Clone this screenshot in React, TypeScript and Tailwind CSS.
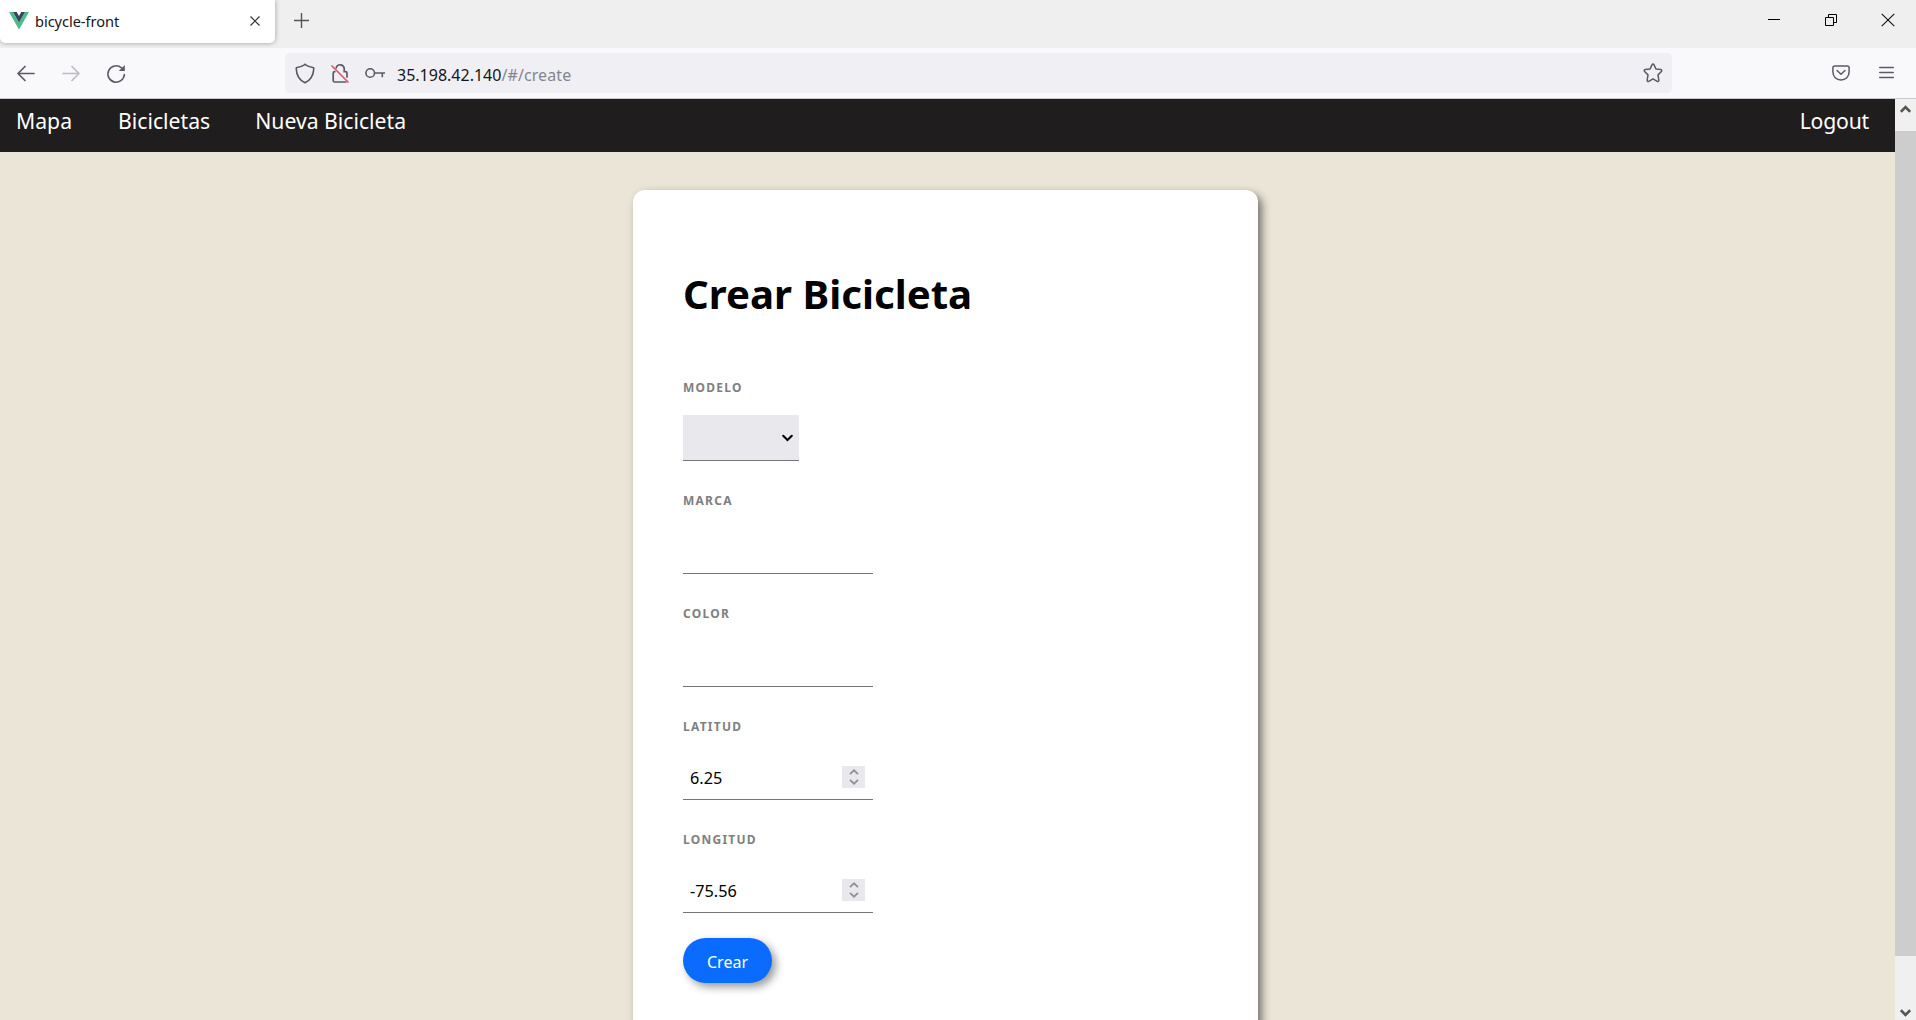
import React from "react";

const navLink = "leading-[30px] text-[21.2px] text-white whitespace-nowrap";

function VueLogo() {
  return (
    <svg className="w-5 h-[18px]" viewBox="0 0 20 18">
      <path d="M0 0h4l6 10.4L16 0h4L10 17.4z" fill="#4dba87" />
      <path d="M4 0h3.7L10 4l2.3-4H16L10 10.4z" fill="#33475b" />
    </svg>
  );
}

function TabStrip() {
  return (
    <div className="flex h-12 bg-[#efefef]">
      <div className="flex h-[43px] w-[275px] items-center rounded-b-[5px] bg-white pl-[9px] shadow-[0_0_5px_rgba(0,0,0,0.35)]">
        <div className="-mt-[2px]"><VueLogo /></div>
        <span className="ml-[6px] mt-px w-[210px] text-[14.6px] tracking-[-0.05px] text-[#15141a]">bicycle-front</span>
        <svg className="-mt-[2px] ml-[5px] h-[10px] w-[10px]" viewBox="0 0 10 10" stroke="#333" strokeWidth="1.2">
          <path d="M.5.5l9 9M9.5.5l-9 9" />
        </svg>
      </div>
      <svg className="ml-[19px] mt-[13px] h-[15px] w-[15px]" viewBox="0 0 15 15" stroke="#555" strokeWidth="1.4">
        <path d="M7.5 0v15M0 7.5h15" />
      </svg>
      <div className="ml-auto flex pr-[21px] pt-[13px]">
        <svg className="mr-[45px] h-[14px] w-3" viewBox="0 0 12 14" stroke="#000">
          <path d="M0 6.5h12" />
        </svg>
        <svg className="mr-[43px] h-[14px] w-[13px]" viewBox="0 0 13 14" fill="none" stroke="#000">
          <path d="M.5 4.5h8v8h-8zM3.500 4.500v-3h8v8h-3" />
        </svg>
        <svg className="h-[14px] w-[14px]" viewBox="0 0 14 14" stroke="#111" strokeWidth="1.1">
          <path d="M.7.9l12.600 12.200M13.300.9L.7 13.100" />
        </svg>
      </div>
    </div>
  );
}

function Toolbar() {
  return (
    <div className="flex h-[51px] items-start border-b border-[#c9c9cc] bg-[#f9f9fb]">
      <div className="flex w-[285px] pl-[17px] pt-[16px]">
        <svg className="h-[19px] w-[18px]" viewBox="0 0 18 19" fill="none" stroke="#5b5b66" strokeWidth="1.7" strokeLinecap="round" strokeLinejoin="round">
          <path d="M17 9.500H1.200M8 2.500L1 9.500l7 7" />
        </svg>
        <svg className="ml-[27px] h-[19px] w-[18px]" viewBox="0 0 18 19" fill="none" stroke="#bdbdc3" strokeWidth="1.7" strokeLinecap="round" strokeLinejoin="round">
          <path d="M1 9.500h15.800M10 2.500l7 7-7 7" />
        </svg>
        <svg className="ml-[26px] h-5 w-5" viewBox="0 0 20 20" fill="none" stroke="#5b5b66" strokeWidth="1.6" strokeLinecap="round">
          <path d="M18.300 10.500a8.200 8.200 0 1 1-2.800-6.700" />
          <path d="M18.800 1v6h-6z" fill="#5b5b66" stroke="none" />
        </svg>
      </div>
      <div className="mt-[5px] flex h-10 w-[1387px] items-center rounded-[5px] bg-[#f0f0f4] pl-[10px] pr-[9px]">
        <svg className="h-[21px] w-5" viewBox="0 0 20 21" fill="none" stroke="#55555f" strokeWidth="1.6" strokeLinejoin="round">
          <path d="M10 1.200C8.400 2.800 4.600 4 2 4.500c-.6.100-.8.500-.8 1C1.500 12 4 17 10 19.800 16 17 18.500 12 18.800 5.500c0-.5-.2-.9-.8-1C15.400 4 11.600 2.800 10 1.200z" />
        </svg>
        <svg className="ml-[16px] h-[22px] w-[18px]" viewBox="0 0 18 22" fill="none" strokeLinecap="round">
          <path d="M5.200 5.800a4.100 4.100 0 0 1 8 .4v3.500h1.300c1 0 1.500.5 1.500 1.500V15M3.800 9.700c-1 0-1.600.5-1.600 1.500v7.200c0 1 .6 1.600 1.600 1.600h11" stroke="#5b5b66" strokeWidth="1.700" />
          <path d="M1 4l16 16" stroke="#e55373" strokeWidth="1.700" />
        </svg>
        <svg className="-mt-[1px] ml-[16px] h-3 w-5" viewBox="0 0 20 12" fill="none" stroke="#5b5b66" strokeWidth="1.600">
          <circle cx="5.200" cy="6" r="4.300" />
          <path d="M9.500 6H20M17.300 6v4.200" />
        </svg>
        <span className="ml-[12px] mt-[3px] text-[16px] text-[#15141a]">
          35.198.42.140<span className="tracking-[0.1px] text-[#85858d]">/#/create</span>
        </span>
        <svg className="ml-auto h-5 w-5" viewBox="0 0 20 20" fill="none" stroke="#5b5b66" strokeWidth="1.500" strokeLinejoin="round">
          <path d="M9.100 1.600c.4-.8 1.400-.8 1.800 0l2 4.300 4.900.7c1 .2 1.300 1.200.6 1.900l-3.400 3.400.8 5.300c.1 1-.8 1.600-1.600 1.100L10 15.800l-4.200 2.500c-.8.500-1.700-.1-1.600-1.100l.8-5.300-3.400-3.400c-.7-.7-.4-1.700.6-1.900l4.900-.7z" />
        </svg>
      </div>
      <div className="ml-auto flex items-start pr-[22px] pt-[17px]">
        <svg className="h-[16px] w-[18px]" viewBox="0 0 19 17" fill="none" stroke="#5b5b66" strokeWidth="1.600" strokeLinecap="round" strokeLinejoin="round">
          <path d="M2.800 1h13.400c1.200 0 1.900.7 1.900 1.900v4.300C18.100 12.500 14.500 16 9.500 16S.9 12.500.9 7.200V2.900C.9 1.700 1.600 1 2.800 1z" />
          <path d="M5.300 5.800l4.200 4 4.200-4" />
        </svg>
        <svg className="ml-[29px] mt-[1px] h-[13px] w-[15px]" viewBox="0 0 15 13" stroke="#5b5b66" strokeWidth="1.500" strokeLinecap="round">
          <path d="M.7 1.500h13.600M.7 6.500h13.600M.7 11.500h13.600" />
        </svg>
      </div>
    </div>
  );
}

function Spinner() {
  return (
    <span className="flex h-[22px] w-[23px] items-center justify-center bg-[#e9e9ed]">
      <svg className="h-[16px] w-[10px]" viewBox="0 0 10 16" fill="none" stroke="#8f8f94" strokeWidth="1.700">
        <path d="M1 5.200l4-3.900 4 3.900M1 10.800l4 3.900 4-3.900" />
      </svg>
    </span>
  );
}

function Field({ label, children }: { label: string; children: React.ReactNode }) {
  return (
    <div className="h-[113px]">
      <div className="mb-[20px] h-[15px] text-[12px] font-bold leading-[15px] tracking-[1.25px] text-[#808080]">{label}</div>
      {children}
    </div>
  );
}

function TextBox({ value, numeric }: { value?: string; numeric?: boolean }) {
  return (
    <div className="flex h-[46px] w-[190px] items-center justify-between border-b border-[#757575] pl-[7px] pr-[8px]">
      <span className="mt-[3px] text-[16.3px] text-black">{value}</span>
      {numeric && <Spinner />}
    </div>
  );
}

function ScrollBar() {
  return (
    <div className="flex w-[21px] flex-col bg-[#f0f0f0]">
      <svg className="ml-[5px] mt-[6px] h-2 w-[11px] shrink-0" viewBox="0 0 11 8" fill="none" stroke="#555" strokeWidth="2.600">
        <path d="M.9 6.800l4.600-4.600 4.600 4.600" />
      </svg>
      <div className="mt-[18px] h-[825px] shrink-0 bg-[#cdcdcd]" />
      <svg className="ml-[5px] mt-[53px] h-2 w-[11px] shrink-0" viewBox="0 0 11 8" fill="none" stroke="#555" strokeWidth="2.600">
        <path d="M.9 1.200l4.600 4.600 4.600-4.600" />
      </svg>
    </div>
  );
}

export default function App() {
  return (
    <div className="flex h-[1020px] w-[1916px] flex-col overflow-hidden font-['Noto_Sans','Open_Sans',sans-serif]">
      <TabStrip />
      <Toolbar />
      <div className="flex h-[921px]">
        <main className="flex w-[1895px] flex-col overflow-hidden bg-[#ebe5d8]">
          <nav className="flex h-[53px] shrink-0 bg-[#201d1e] pl-4 pr-[26px] pt-[7px]">
            <a className={navLink}>Mapa</a>
            <a className={navLink + " ml-[46px]"}>Bicicletas</a>
            <a className={navLink + " ml-[45px]"}>Nueva Bicicleta</a>
            <a className={navLink + " ml-auto tracking-[-0.2px]"}>Logout</a>
          </nav>
          <section className="ml-[633px] mt-[38px] h-[900px] w-[625px] shrink-0 rounded-[12px] bg-white pl-[50px] pt-[74px] shadow-[4px_4px_8px_rgba(0,0,0,0.5)]">
            <h1 className="mb-[56px] h-[60px] text-[40.2px] font-bold leading-[60px] text-black">Crear Bicicleta</h1>
            <Field label="MODELO">
              <div className="flex h-[46px] w-[116px] items-center justify-end border-b border-[#757575] bg-[#e9e9ed] pr-[6px]">
                <svg className="mt-[1px] h-2 w-[11px]" viewBox="0 0 11 8" fill="none" stroke="#000" strokeWidth="2" strokeLinecap="round">
                  <path d="M1.200 1.700l4.300 4.300 4.300-4.300" />
                </svg>
              </div>
            </Field>
            <Field label="MARCA"><TextBox /></Field>
            <Field label="COLOR"><TextBox /></Field>
            <Field label="LATITUD"><TextBox value="6.25" numeric /></Field>
            <Field label="LONGITUD"><TextBox value="-75.56" numeric /></Field>
            <button className="-mt-[7px] block h-[45px] w-[89px] rounded-full bg-[#0a6cff] pt-[2px] text-[16px] text-white shadow-[4px_4px_8px_rgba(0,0,0,0.4)]">Crear</button>
          </section>
        </main>
        <ScrollBar />
      </div>
    </div>
  );
}
